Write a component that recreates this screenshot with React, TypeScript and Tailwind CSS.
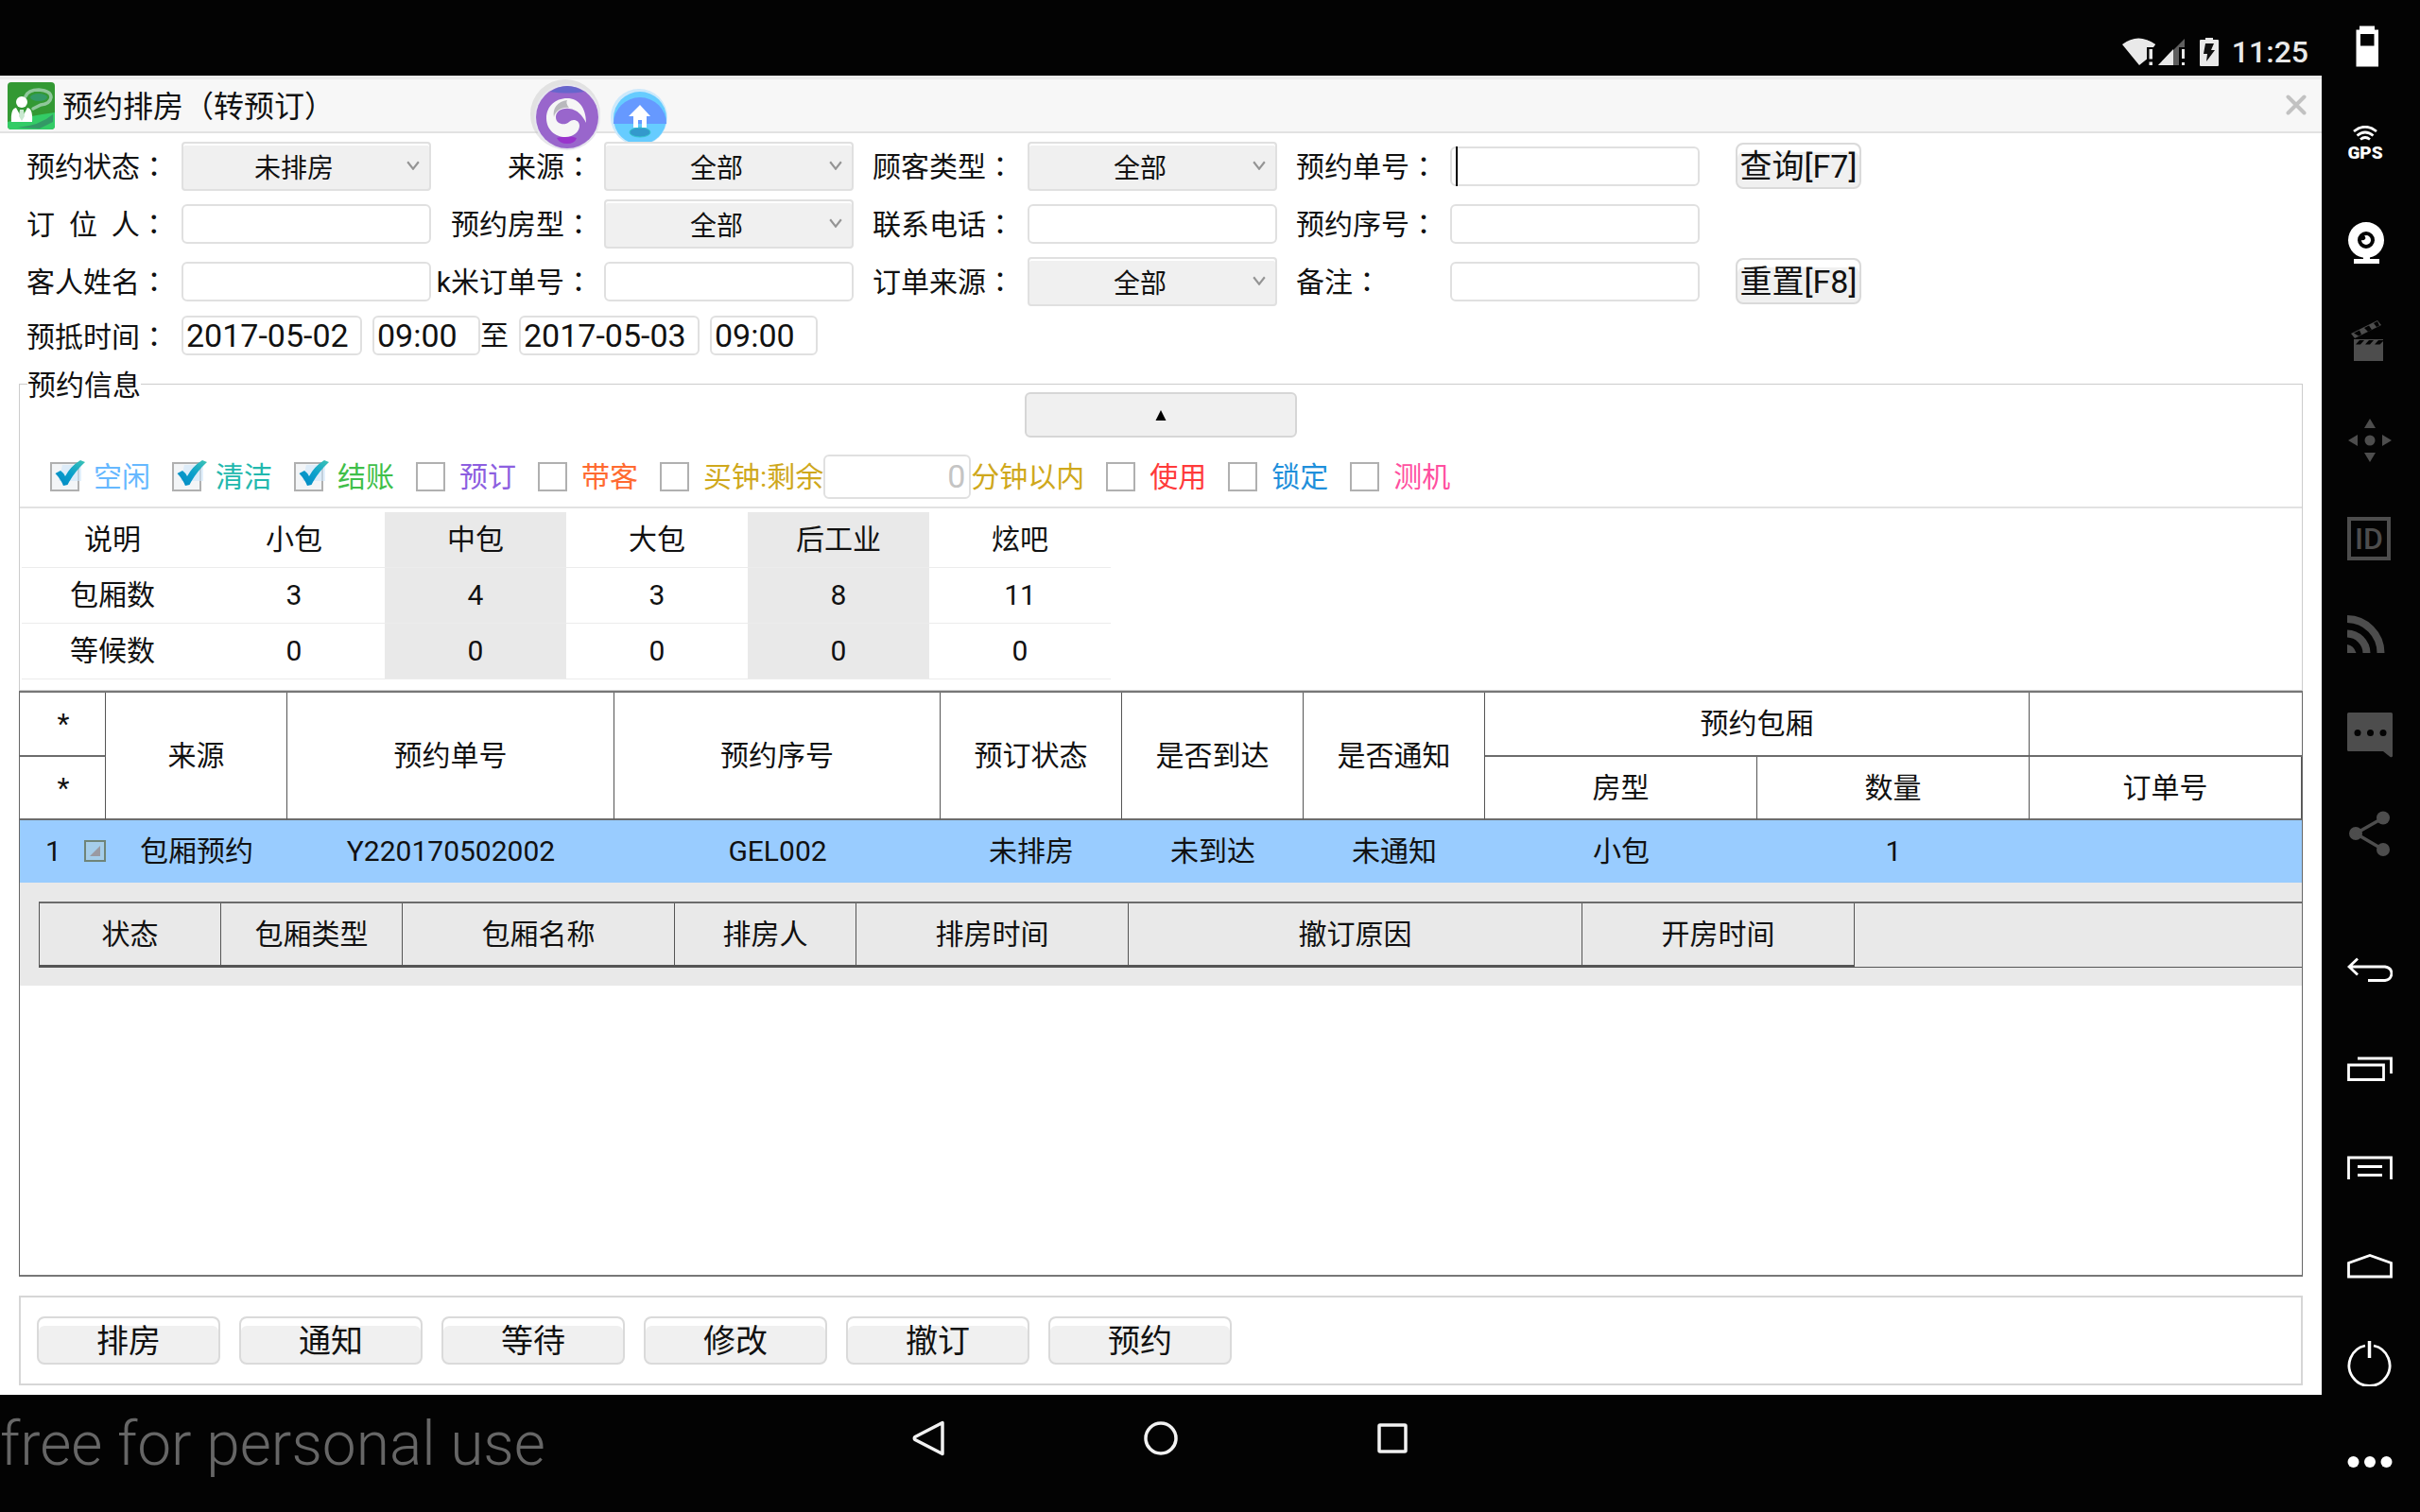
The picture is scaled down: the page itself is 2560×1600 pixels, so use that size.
import React, { useState } from "react";

const Wide = ({ children }: { children: string }) => <span className="[font-family:'Noto_Sans_CJK_TC',sans-serif]">{children}</span>;

function FieldLabel({ id, children, className = "" }: { id: string; children: React.ReactNode; className?: string }) {
  return (
    <label htmlFor={id} className={`whitespace-nowrap text-[30px] leading-[44px] ${className}`}>
      {children}
      <Wide>：</Wide>
    </label>
  );
}

function TextField({ id, caret = false }: { id: string; caret?: boolean }) {
  return (
    <div className="relative h-[42px]">
      <input id={id} type="text" className="h-full w-full rounded-md border-2 border-[#e0e0e0] bg-white px-2 text-[30px] outline-none" />
      {caret && <span className="absolute top-0 left-1.5 h-full w-0.5 bg-black" />}
    </div>
  );
}

function SelectField({ id, value, options }: { id: string; value: string; options: string[] }) {
  return (
    <div className="relative h-[52px]">
      <select
        id={id}
        defaultValue={value}
        className="h-full w-full appearance-none rounded border-2 border-[#e0e0e0] bg-[#f0f0f0] pt-1.5 pr-[26px] text-center text-[28px] leading-[40px] shadow-[inset_0_2px_0_#fff] outline-none [text-align-last:center]"
      >
        {options.map((o) => (
          <option key={o}>{o}</option>
        ))}
      </select>
      <svg className="pointer-events-none absolute top-5 right-3 h-2.5 w-3.5" viewBox="0 0 16 12" fill="none" stroke="#949494" strokeWidth="2.500">
        <path d="M1 1.5 8 10.5 15 1.5" />
      </svg>
    </div>
  );
}

function StatusCheck({ id, label, color, on = false }: { id: string; label: string; color: string; on?: boolean }) {
  return (
    <div className="flex items-center gap-[15px]">
      <span className="relative h-[31px] w-[31px]">
        <input id={id} type="checkbox" defaultChecked={on} className="peer block h-[31px] w-[31px] appearance-none border-2 border-[#b0b0b0] bg-white checked:bg-[#f3f5f7]" />
        <svg className="pointer-events-none absolute -top-1.5 left-1 hidden h-9 w-9 peer-checked:block" viewBox="0 0 36 36">
          <defs>
            <linearGradient id={`${id}-tick`} x1="1" y1="0" x2="0" y2="1">
              <stop offset="0" stopColor="#3fc4b4" />
              <stop offset="0.5" stopColor="#0aa0cc" />
              <stop offset="1" stopColor="#0487c2" />
            </linearGradient>
          </defs>
          <path d="M9 9h20v17H5z" fill="#cfe6fa" opacity="0.6" />
          <path d="M1.500 18 7 15Q10.500 17.500 12 21 17.500 10.500 28 4L33 6Q21 17 14.500 30L10 31Q7 23.500 1.500 18Z" fill={`url(#${id}-tick)`} />
        </svg>
      </span>
      <label htmlFor={id} className={`text-[30px] leading-[44px] whitespace-nowrap ${color}`}>
        {label}
      </label>
    </div>
  );
}

function ActionButton({ label }: { label: string }) {
  return (
    <button className="h-[51px] w-[194px] rounded-lg border-2 border-[#dadada] bg-[#f0f0f0] text-[34px] leading-[46px] shadow-[inset_0_8px_0_#fff]">
      {label}
    </button>
  );
}

const summary = {
  heads: ["说明", "小包", "中包", "大包", "后工业", "炫吧"],
  rows: [
    ["包厢数", "3", "4", "3", "8", "11"],
    ["等候数", "0", "0", "0", "0", "0"],
  ],
};

const detailCols = ["状态", "包厢类型", "包厢名称", "排房人", "排房时间", "撤订原因", "开房时间"];
const actions = ["排房", "通知", "等待", "修改", "撤订", "预约"];
const headCell = "border-r border-b-2 border-r-[#555] border-b-[#6c6c6c] p-0 font-normal";

function StatusBar() {
  return (
    <header className="flex h-20 items-center justify-end bg-[#030303] pt-[30px] pr-3.5 text-[#e9e9e9]">
      <svg className="mr-0.5 h-[30px] w-9" viewBox="0 0 36 30">
        <path d="M0 7Q17-6 35 7L32 11H28V21L18 29Z" fill="#e9e9e9" />
        <path d="M26 9h8v21h-8z" fill="#030303" />
        <path d="M26 2.500Q31 4 35 7L33 10H26z" fill="#e9e9e9" />
        <path d="M28.500 12h3.500v10.500h-3.500zM28.500 25.500h3.500v3.500h-3.500z" fill="#e9e9e9" />
      </svg>
      <svg className="mr-3.5 h-[30px] w-[30px]" viewBox="0 0 30 30" fill="#e9e9e9">
        <path d="M0 29 28 1V10H22V29Z" fill="#5f5f5f" />
        <path d="M0 29 16 12V29Z" />
        <path d="M25 12h3v10h-3zM25 26h3v3h-3z" />
      </svg>
      <svg className="mr-3.5 h-[30px] w-5" viewBox="0 0 20 30" fill="#e9e9e9">
        <path d="M6 0h8v2h5q1 0 1 1v26q0 1-1 1H1q-1 0-1-1V3q0-1 1-1h5z" />
        <path d="M6 6h9l-3 7h4L7 25l1-8H4z" fill="#111" />
      </svg>
      <span className="text-[32px] leading-[32px] font-medium">11:25</span>
    </header>
  );
}

function FloatingBadges() {
  return (
    <>
      <svg className="absolute top-0 left-[560px] h-20 w-20" viewBox="0 0 80 80">
        <circle cx="38" cy="37" r="37" fill="#bbb" opacity="0.35" />
        <circle cx="40" cy="40" r="35" fill="#e6e6ee" />
        <circle cx="40" cy="40" r="33" fill="#9966cc" />
        <path d="M22 13Q40 1 58 13 40 16 22 13Z" fill="#6666cc" />
        <path d="M29 62Q40 58 50 62 48 68 40 68 32 68 29 62Z" fill="#9933cc" />
        <path
          d="M60 46C60 30 52 20 40 20 27 20 18 29 18 41 18 53 27 61 38 61 47 61 53 55 53 49 53 43 46 41 42 45 38 49 28 48 28 40 28 34 34 30 42 31 51 32 56 38 60 46Z"
          fill="#f6f6f6"
        />
        <path d="M40 22C30 23 24 31 26 40 27 34 34 29 42 30Q38 25 40 22Z" fill="#b9b9bd" />
      </svg>
      <svg className="absolute top-2.5 left-[646px] h-[62px] w-[62px]" viewBox="0 0 62 62">
        <circle cx="30" cy="30" r="30" fill="#cde9fb" />
        <circle cx="31" cy="31" r="28" fill="#66ccff" />
        <path d="M3 37a28 28 0 1 1 56 0Z" fill="#6699ff" />
        <ellipse cx="31" cy="46" rx="11" ry="5" fill="#3399cc" stroke="#33c4cc" />
        <path d="M31 17 42 29H38V41H33V33H29V41H24V29H19Z" fill="#fff" />
      </svg>
    </>
  );
}

function TitleBar() {
  return (
    <div className="relative flex h-[61px] items-center border-t-4 border-b-2 border-t-[#ececec] border-b-[#e2e2e2] bg-[#f7f7f7] pr-4 pl-2">
      <svg className="h-[50px] w-[50px]" viewBox="0 0 50 50">
        <rect width="50" height="50" rx="4" fill="#339933" />
        <path d="M0 42Q20 36 50 32V46q0 4-4 4H4q-4 0-4-4Z" fill="#33cc66" />
        <path d="M10 48Q34 46 48 34V42L34 49Z" fill="#339966" />
        <path d="M19 15Q22 8 33 8 46 9 46 16 45 23 35 24L27 28" fill="none" stroke="#8fc79a" strokeWidth="3.500" strokeLinecap="round" />
        <ellipse cx="33" cy="16" rx="9" ry="4" fill="#339966" />
        <circle cx="15" cy="21" r="6" fill="#fff" />
        <path d="M4 42Q3 28 9 27L15 38 21 27Q27 28 26 42Z" fill="#fff" />
        <path d="M13 29h4l1 7-3 5-3-5z" fill="#c9e8cf" />
      </svg>
      <h1 className="ml-2 text-[32px] leading-[48px] whitespace-nowrap">
        预约排房<Wide>（</Wide>转预订<Wide>）</Wide>
      </h1>
      <button aria-label="关闭" className="ml-auto pb-0.5">
        <svg className="h-[22px] w-[22px]" viewBox="0 0 22 22" stroke="#c2c2c2" strokeWidth="4" strokeLinecap="round">
          <path d="M2.500 2.500 19.500 19.500M19.500 2.500 2.500 19.500" />
        </svg>
      </button>
      <FloatingBadges />
    </div>
  );
}

function QueryButton({ label }: { label: string }) {
  return (
    <button type="button" className="ml-[38px] h-[49px] w-[133px] rounded-lg border-2 border-[#dadada] bg-[#f0f0f0] text-[34px] leading-[46px] whitespace-nowrap shadow-[inset_0_8px_0_#fff]">
      <span className="flex justify-center">{label}</span>
    </button>
  );
}

function Filters() {
  const box = "h-[42px] rounded-md border-2 border-[#e0e0e0] bg-white pl-[3px] text-[34px] leading-[36px] outline-none";
  return (
    <form className="pt-1 pl-7">
      <div className="grid auto-rows-[61px] grid-cols-[164px_264px_183px_264px_184px_264px_183px_264px_auto] items-center">
        <FieldLabel id="state">预约状态</FieldLabel>
        <SelectField id="state" value="未排房" options={["未排房", "已排房"]} />
        <FieldLabel id="source" className="pr-3 text-right">来源</FieldLabel>
        <SelectField id="source" value="全部" options={["全部"]} />
        <FieldLabel id="ctype" className="pl-5">顾客类型</FieldLabel>
        <SelectField id="ctype" value="全部" options={["全部"]} />
        <FieldLabel id="orderno" className="pl-5">预约单号</FieldLabel>
        <TextField id="orderno" caret />
        <QueryButton label="查询[F7]" />

        <FieldLabel id="booker">{"订\u00a0\u00a0位\u00a0\u00a0人"}</FieldLabel>
        <TextField id="booker" />
        <FieldLabel id="rtype" className="pr-3 text-right">预约房型</FieldLabel>
        <SelectField id="rtype" value="全部" options={["全部"]} />
        <FieldLabel id="phone" className="pl-5">联系电话</FieldLabel>
        <TextField id="phone" />
        <FieldLabel id="serial" className="pl-5">预约序号</FieldLabel>
        <TextField id="serial" />
        <span />

        <FieldLabel id="guest">客人姓名</FieldLabel>
        <TextField id="guest" />
        <FieldLabel id="kmi" className="pr-3 text-right">k米订单号</FieldLabel>
        <TextField id="kmi" />
        <FieldLabel id="osource" className="pl-5">订单来源</FieldLabel>
        <SelectField id="osource" value="全部" options={["全部"]} />
        <FieldLabel id="remark" className="pl-5">备注</FieldLabel>
        <TextField id="remark" />
        <QueryButton label="重置[F8]" />
      </div>
      <div className="flex h-[54px] items-center">
        <FieldLabel id="from" className="w-[164px]">预抵时间</FieldLabel>
        <input id="from" type="text" defaultValue="2017-05-02" className={`${box} w-[191px]`} />
        <input aria-label="开始时刻" type="text" defaultValue="09:00" className={`${box} ml-[11px] w-[114px]`} />
        <span className="w-[41px] text-[30px] leading-[44px]">至</span>
        <input aria-label="结束日期" type="text" defaultValue="2017-05-03" className={`${box} w-[191px]`} />
        <input aria-label="结束时刻" type="text" defaultValue="09:00" className={`${box} ml-[11px] w-[114px]`} />
      </div>
    </form>
  );
}

function InfoPanel() {
  const [open, setOpen] = useState(true);
  return (
    <fieldset className="mx-5 mt-[15px] border border-[#ccc] pb-[11px]">
      <legend className="ml-2 h-[18px] text-[30px] leading-[22px]">预约信息</legend>
      <button
        type="button"
        aria-label="收起"
        onClick={() => setOpen(!open)}
        className="mx-auto flex h-12 w-[288px] items-center justify-center rounded-md border-2 border-[#d6d6d6] bg-[#f0f0f0]"
      >
        <svg className="h-3 w-3" viewBox="0 0 12 12">
          <path d="M6 1 11.500 12H0.500Z" fill="#000" />
        </svg>
      </button>
      <div className="mt-[18px] flex items-center gap-[23px] border-b-2 border-[#e2e2e2] pb-2 pl-8">
        <StatusCheck id="c1" label="空闲" color="text-[#66b8ff]" on />
        <StatusCheck id="c2" label="清洁" color="text-[#22b8ae]" on />
        <StatusCheck id="c3" label="结账" color="text-[#3fbf4a]" on />
        <StatusCheck id="c4" label="预订" color="text-[#8d5fe0]" />
        <StatusCheck id="c5" label="带客" color="text-[#ff6a30]" />
        <div className="flex items-center">
          <StatusCheck id="c6" label="买钟:剩余" color="text-[#cfa81c]" />
          <input aria-label="剩余分钟" type="text" placeholder="0" className="h-[47px] w-[156px] rounded-md border-2 border-[#e0e0e0] pr-1 text-right text-[34px] outline-none placeholder:text-[#c4c4c4]" />
          <span className="text-[30px] leading-[44px] text-[#cfa81c]">分钟以内</span>
        </div>
        <StatusCheck id="c7" label="使用" color="text-[#ff3a3a]" />
        <StatusCheck id="c8" label="锁定" color="text-[#1f8fdb]" />
        <StatusCheck id="c9" label="测机" color="text-[#ff4fa0]" />
      </div>
      <table className="mt-1 ml-0.5 table-fixed border-separate border-spacing-0 text-center text-[30px] leading-[44px]">
        <thead>
          <tr className="h-[59px]">
            {summary.heads.map((h, i) => (
              <th key={h} className={`w-48 border-b border-[#ececec] p-0 font-normal ${i === 2 || i === 4 ? "bg-[#e9e9e9]" : ""}`}>
                {h}
              </th>
            ))}
          </tr>
        </thead>
        <tbody>
          {summary.rows.map((r) => (
            <tr key={r[0]} className="h-[59px]">
              {r.map((v, i) => (
                <td key={i} className={`border-b border-[#ececec] p-0 ${i === 2 || i === 4 ? "bg-[#e9e9e9]" : ""}`}>
                  {v}
                </td>
              ))}
            </tr>
          ))}
        </tbody>
      </table>
    </fieldset>
  );
}

function DetailTable() {
  return (
    <table className="h-[70px] w-full table-fixed border-separate border-spacing-0 border-t-2 border-l border-t-[#6c6c6c] border-l-[#555]">
      <colgroup>
        <col className="w-48" />
        <col className="w-48" />
        <col className="w-72" />
        <col className="w-48" />
        <col className="w-72" />
        <col className="w-[480px]" />
        <col className="w-72" />
        <col />
      </colgroup>
      <thead>
        <tr>
          {detailCols.map((c) => (
            <th key={c} className="border-r border-b-3 border-r-[#555] border-b-[#555] p-0 font-normal">
              {c}
            </th>
          ))}
          <td className="border-b border-[#555]" />
        </tr>
      </thead>
    </table>
  );
}

function Reservations() {
  return (
    <div className="mx-5 flex-1 border border-y-2 border-x-[#666] border-y-[#777] bg-white">
      <table className="w-full table-fixed border-separate border-spacing-0 text-center text-[30px] leading-[44px]">
        <colgroup>
          <col className="w-[91px]" />
          <col className="w-48" />
          <col className="w-[346px]" />
          <col className="w-[345px]" />
          <col className="w-48" />
          <col className="w-48" />
          <col className="w-48" />
          <col className="w-72" />
          <col className="w-72" />
          <col />
        </colgroup>
        <thead>
          <tr className="h-[68px]">
            <th className={`${headCell} pl-0.5`}>*</th>
            {["来源", "预约单号", "预约序号", "预订状态", "是否到达", "是否通知"].map((h) => (
              <th key={h} rowSpan={2} className={headCell}>
                {h}
              </th>
            ))}
            <th colSpan={2} className={headCell}>预约包厢</th>
            <td className="border-b-2 border-[#6c6c6c]" />
          </tr>
          <tr className="h-[67px]">
            <th className={`${headCell} pl-0.5`}>*</th>
            <th className={headCell}>房型</th>
            <th className={headCell}>数量</th>
            <th className={headCell}>订单号</th>
          </tr>
        </thead>
        <tbody>
          <tr className="h-[66px] bg-[#99ccff]">
            <td className="p-0">
              <div className="flex items-center justify-between pl-[27px]">
                1
                <button aria-label="展开" className="flex">
                  <svg className="h-6 w-6" viewBox="0 0 24 24">
                    <rect x="2" y="1" width="21" height="21" fill="#a5cdea" stroke="#6f8478" strokeWidth="2" />
                    <path d="M18 6V17H7Z" fill="#9a9aa2" />
                  </svg>
                </button>
              </div>
            </td>
            {["包厢预约", "Y220170502002", "GEL002", "未排房", "未到达", "未通知", "小包", "1", ""].map((v, i) => (
              <td key={i} className="p-0">
                {v}
              </td>
            ))}
          </tr>
          <tr>
            <td colSpan={10} className="bg-[#e9e9e9] pt-5 pb-[19px] pl-5">
              <DetailTable />
            </td>
          </tr>
        </tbody>
      </table>
    </div>
  );
}

function NavBar() {
  return (
    <nav className="relative flex h-[124px] items-center justify-center gap-[205px] bg-[#030303] pb-8">
      <p className="absolute top-3.5 left-0 text-[64px] leading-[78px] font-light text-[#666]">free for personal use</p>
      <button aria-label="返回">
        <svg className="h-10 w-10" viewBox="0 0 40 40" fill="none" stroke="#f2f2f2" strokeWidth="3.500">
          <path d="M34 3.500V36.500L5 21.500Q3.500 20 5 18.500Z" strokeLinejoin="round" />
        </svg>
      </button>
      <button aria-label="主页">
        <svg className="h-10 w-10" viewBox="0 0 40 40" fill="none" stroke="#f2f2f2" strokeWidth="3.500">
          <circle cx="20" cy="20" r="16" />
        </svg>
      </button>
      <button aria-label="最近任务">
        <svg className="h-10 w-10" viewBox="0 0 40 40" fill="none" stroke="#f2f2f2" strokeWidth="3.500">
          <rect x="6" y="6" width="28" height="28" rx="1" />
        </svg>
      </button>
    </nav>
  );
}

function SideButton({ label, children, dim = false, first = false }: { label: string; children: React.ReactNode; dim?: boolean; first?: boolean }) {
  return (
    <button aria-label={label} className={`flex w-full items-center justify-center pr-0.5 ${first ? "h-[102px] pb-1" : "h-[104px]"} ${dim ? "text-[#4d4d4d]" : "text-white"}`}>
      <svg className="h-12 w-12" viewBox="0 0 48 48" fill="currentColor">
        {children}
      </svg>
    </button>
  );
}

function SideBar() {
  return (
    <aside className="flex w-[104px] flex-col bg-[#030303]">
      <SideButton label="电池" first>
        <path d="M13 2.500H29V6.500H33V45.500H9.500V6.500H13ZM14 11V23.500H28.500V11Z" fillRule="evenodd" />
      </SideButton>
      <button aria-label="GPS" className="flex h-[104px] w-full flex-col items-center justify-center pr-3 pb-1 text-white">
        <svg className="h-4 w-[26px]" viewBox="0 0 26 16" fill="none" stroke="currentColor" strokeWidth="2.800">
          <path d="M1 6Q13-3.500 25 6M4.500 10.500Q13 3.500 21.500 10.500M8 14.500Q13 10.500 18 14.500" />
        </svg>
        <span className="mt-1 text-[19px] leading-[18px] font-black">GPS</span>
      </button>
      <SideButton label="摄像头">
        <path
          d="M20 1a19 19 0 1 1 0 38 19 19 0 0 1 0-38ZM20 11a9 9 0 1 0 0 18 9 9 0 0 0 0-18Z"
          fillRule="evenodd"
        />
        <path d="M17 37h7v3h10v5H7v-5h10z" />
        <path d="M20 15a5 5 0 1 1-5 5q2 1 4-1 1-2-1-3.500Z" />
      </SideButton>
      <SideButton label="录像" dim>
        <path d="M7 21H38V44H7Z" />
        <path d="M4 15 32 1 36 6 8 20Z" />
        <path d="M9 26.500 13 22h5l-4 4.500zM19 26.500 23 22h5l-4 4.500zM29 26.500 33 22h5v1l-3.500 3.500zM7 14.500 13 11.500 15 16l-3 1.500zM18 9 23 6.500 26 11l-4 2zM28 4 32 2 34 6.500 31 8z" fill="#030303" />
      </SideButton>
      <SideButton label="方向" dim>
        <path d="M24 1 30 11H18ZM24 47 30 37H18ZM1 24 11 18V30ZM47 24 37 18V30Z" />
        <circle cx="24" cy="24" r="5.500" />
      </SideButton>
      <button aria-label="ID" className="flex h-[104px] w-full items-center justify-center pr-1 text-[#4d4d4d]">
        <span className="flex h-[46px] w-[46px] items-center justify-center border-4 border-current text-[32px] leading-[32px] font-medium">ID</span>
      </button>
      <SideButton label="网络" dim>
        <g fill="none" stroke="currentColor" strokeWidth="8">
          <path d="M0 5A36 36 0 0 1 35.500 41M0 20.500A21 21 0 0 1 20.500 41" />
        </g>
        <path d="M0 32Q7 33 9.500 41H0Z" />
      </SideButton>
      <SideButton label="短信" dim>
        <path d="M1.500 0H46.500Q48 0 48 1.500V46Q47.500 48 45.500 47L38 41H1.500Q0 41 0 39.500V1.500Q0 0 1.500 0Z" />
        <g fill="#030303">
          <circle cx="11" cy="21.500" r="3.500" />
          <circle cx="24.500" cy="21.500" r="3.500" />
          <circle cx="38" cy="21.500" r="3.500" />
        </g>
      </SideButton>
      <SideButton label="分享" dim>
        <circle cx="9" cy="24" r="7" />
        <circle cx="38" cy="7.500" r="7" />
        <circle cx="38" cy="41" r="7" />
        <path d="M38 7.500 9 24 38 41" fill="none" stroke="currentColor" strokeWidth="3.500" />
      </SideButton>
      <div className="mt-auto pb-px">
        <SideButton label="返回">
          <g fill="none" stroke="currentColor" strokeWidth="2.800">
            <path d="M2 20H40Q47 21 47 27.500 46 34 40 34.500H22M11 11.500 2 20 11 28.500" />
          </g>
        </SideButton>
        <SideButton label="最近任务">
          <g fill="none" stroke="currentColor" strokeWidth="2.800">
            <path d="M1.500 20H38.500V35.500H1.500ZM11 13H46.500V29" />
          </g>
        </SideButton>
        <SideButton label="菜单">
          <g fill="none" stroke="currentColor" strokeWidth="2.800">
            <path d="M1.500 37V14H46.500V37M11 23.500H37M11 32.500H37" />
          </g>
        </SideButton>
        <SideButton label="主页">
          <path d="M1.500 36V21.500L24 13.500 46.500 21.500V36Z" fill="none" stroke="currentColor" strokeWidth="2.800" />
        </SideButton>
        <SideButton label="电源">
          <path d="M19 5A21.500 21.500 0 1 0 28 5" fill="none" stroke="currentColor" strokeWidth="2.800" />
          <path d="M23.500 0V18" fill="none" stroke="currentColor" strokeWidth="3.500" />
        </SideButton>
        <SideButton label="更多">
          <circle cx="6.500" cy="24" r="6" />
          <circle cx="24" cy="24" r="6" />
          <circle cx="41.500" cy="24" r="6" />
        </SideButton>
      </div>
    </aside>
  );
}

export default function App() {
  return (
    <div className="flex min-h-screen bg-[#030303] [font-family:Roboto,'Noto_Sans_CJK_SC',sans-serif] text-[#111]">
      <div className="flex min-w-0 flex-1 flex-col">
        <StatusBar />
        <main className="flex flex-1 flex-col bg-white">
          <TitleBar />
          <Filters />
          <InfoPanel />
          <Reservations />
          <div className="mx-5 mt-5 mb-2.5 flex gap-5 border-2 border-[#d6d6d6] py-5 pl-[17px]">
            {actions.map((a) => (
              <ActionButton key={a} label={a} />
            ))}
          </div>
        </main>
        <NavBar />
      </div>
      <SideBar />
    </div>
  );
}
